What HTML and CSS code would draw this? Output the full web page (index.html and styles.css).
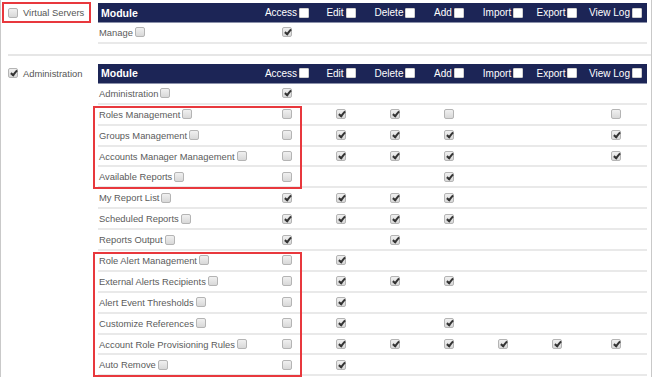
FILE: index.html
```html
<!DOCTYPE html>
<html>
<head>
<meta charset="utf-8">
<link rel="stylesheet" href="styles.css">
</head>
<body>
<div class="frame">
  <section class="perm">
    <div class="side">
      <div class="side-label hl"><span class="cb"></span><span>Virtual Servers</span></div>
    </div>
    <div class="table">
      <div class="row head">
        <div class="c mod">Module</div>
        <div class="c">Access<span class="hcb"></span></div>
        <div class="c">Edit<span class="hcb"></span></div>
        <div class="c">Delete<span class="hcb"></span></div>
        <div class="c">Add<span class="hcb"></span></div>
        <div class="c">Import<span class="hcb"></span></div>
        <div class="c">Export<span class="hcb"></span></div>
        <div class="c">View Log<span class="hcb"></span></div>
      </div>
      <div class="row">
        <div class="c mod">Manage<span class="cb"></span></div>
        <div class="c"><span class="cb on"></span></div>
        <div class="c"></div><div class="c"></div><div class="c"></div><div class="c"></div><div class="c"></div><div class="c"></div>
      </div>
    </div>
  </section>
  <div class="divider"></div>
  <section class="perm">
    <div class="side">
      <div class="side-label"><span class="cb on"></span><span>Administration</span></div>
    </div>
    <div class="table">
      <div class="row head">
        <div class="c mod">Module</div>
        <div class="c">Access<span class="hcb"></span></div>
        <div class="c">Edit<span class="hcb"></span></div>
        <div class="c">Delete<span class="hcb"></span></div>
        <div class="c">Add<span class="hcb"></span></div>
        <div class="c">Import<span class="hcb"></span></div>
        <div class="c">Export<span class="hcb"></span></div>
        <div class="c">View Log<span class="hcb"></span></div>
      </div>
      <div class="row">
        <div class="c mod">Administration<span class="cb"></span></div>
        <div class="c"><span class="cb on"></span></div>
        <div class="c"></div><div class="c"></div><div class="c"></div><div class="c"></div><div class="c"></div><div class="c"></div>
      </div>
      <div class="group">
        <div class="row">
          <div class="c mod">Roles Management<span class="cb"></span></div>
          <div class="c"><span class="cb"></span></div>
          <div class="c"><span class="cb on"></span></div>
          <div class="c"><span class="cb on"></span></div>
          <div class="c"><span class="cb"></span></div>
          <div class="c"></div><div class="c"></div>
          <div class="c"><span class="cb"></span></div>
        </div>
        <div class="row">
          <div class="c mod">Groups Management<span class="cb"></span></div>
          <div class="c"><span class="cb"></span></div>
          <div class="c"><span class="cb on"></span></div>
          <div class="c"><span class="cb on"></span></div>
          <div class="c"><span class="cb on"></span></div>
          <div class="c"></div><div class="c"></div>
          <div class="c"><span class="cb on"></span></div>
        </div>
        <div class="row">
          <div class="c mod">Accounts Manager Management<span class="cb"></span></div>
          <div class="c"><span class="cb"></span></div>
          <div class="c"><span class="cb on"></span></div>
          <div class="c"><span class="cb on"></span></div>
          <div class="c"><span class="cb on"></span></div>
          <div class="c"></div><div class="c"></div>
          <div class="c"><span class="cb on"></span></div>
        </div>
        <div class="row">
          <div class="c mod">Available Reports<span class="cb"></span></div>
          <div class="c"><span class="cb"></span></div>
          <div class="c"></div><div class="c"></div>
          <div class="c"><span class="cb on"></span></div>
          <div class="c"></div><div class="c"></div><div class="c"></div>
        </div>
      </div>
      <div class="row">
        <div class="c mod">My Report List<span class="cb"></span></div>
        <div class="c"><span class="cb on"></span></div>
        <div class="c"><span class="cb on"></span></div>
        <div class="c"><span class="cb on"></span></div>
        <div class="c"><span class="cb on"></span></div>
        <div class="c"></div><div class="c"></div><div class="c"></div>
      </div>
      <div class="row">
        <div class="c mod">Scheduled Reports<span class="cb"></span></div>
        <div class="c"><span class="cb on"></span></div>
        <div class="c"><span class="cb on"></span></div>
        <div class="c"><span class="cb on"></span></div>
        <div class="c"><span class="cb on"></span></div>
        <div class="c"></div><div class="c"></div><div class="c"></div>
      </div>
      <div class="row">
        <div class="c mod">Reports Output<span class="cb"></span></div>
        <div class="c"><span class="cb on"></span></div>
        <div class="c"></div>
        <div class="c"><span class="cb on"></span></div>
        <div class="c"></div><div class="c"></div><div class="c"></div><div class="c"></div>
      </div>
      <div class="group">
        <div class="row">
          <div class="c mod">Role Alert Management<span class="cb"></span></div>
          <div class="c"><span class="cb"></span></div>
          <div class="c"><span class="cb on"></span></div>
          <div class="c"></div><div class="c"></div><div class="c"></div><div class="c"></div><div class="c"></div>
        </div>
        <div class="row">
          <div class="c mod">External Alerts Recipients<span class="cb"></span></div>
          <div class="c"><span class="cb"></span></div>
          <div class="c"><span class="cb on"></span></div>
          <div class="c"><span class="cb on"></span></div>
          <div class="c"><span class="cb on"></span></div>
          <div class="c"></div><div class="c"></div><div class="c"></div>
        </div>
        <div class="row">
          <div class="c mod">Alert Event Thresholds<span class="cb"></span></div>
          <div class="c"><span class="cb"></span></div>
          <div class="c"><span class="cb on"></span></div>
          <div class="c"></div><div class="c"></div><div class="c"></div><div class="c"></div><div class="c"></div>
        </div>
        <div class="row">
          <div class="c mod">Customize References<span class="cb"></span></div>
          <div class="c"><span class="cb"></span></div>
          <div class="c"><span class="cb on"></span></div>
          <div class="c"></div>
          <div class="c"><span class="cb on"></span></div>
          <div class="c"></div><div class="c"></div><div class="c"></div>
        </div>
        <div class="row">
          <div class="c mod">Account Role Provisioning Rules<span class="cb"></span></div>
          <div class="c"><span class="cb"></span></div>
          <div class="c"><span class="cb on"></span></div>
          <div class="c"><span class="cb on"></span></div>
          <div class="c"><span class="cb on"></span></div>
          <div class="c"><span class="cb on"></span></div>
          <div class="c"><span class="cb on"></span></div>
          <div class="c"><span class="cb on"></span></div>
        </div>
        <div class="row">
          <div class="c mod">Auto Remove<span class="cb"></span></div>
          <div class="c"><span class="cb"></span></div>
          <div class="c"><span class="cb on"></span></div>
          <div class="c"></div><div class="c"></div><div class="c"></div><div class="c"></div><div class="c"></div>
        </div>
      </div>
    </div>
  </section>
</div>
</body>
</html>
```
FILE: styles.css
```css
html, body {
  margin: 0;
  padding: 0;
  background: #fff;
}
body {
  font-family: "Liberation Sans", Arial, sans-serif;
  color: #555;
}
.frame {
  width: 650px;
  border: 1px solid #c9c9c9;
  border-top: none;
  padding-bottom: 1px;
}
.perm {
  display: flex;
  align-items: flex-start;
  padding-top: 3px;
}
.side {
  width: 97px;
  flex: none;
  display: flex;
  align-items: flex-start;
}
.side-label {
  display: flex;
  align-items: center;
  gap: 5px;
  height: 17px;
  margin-top: -1px;
  margin-left: 1px;
  padding: 0 4px;
  border: 2px solid transparent;
  font-size: 9.4px;
  color: #555;
  white-space: nowrap;
}
.side-label.hl {
  border-color: #e8383d;
  padding-right: 5px;
}
.table {
  width: 549px;
  flex: none;
}
.row {
  display: grid;
  grid-template-columns: 162px repeat(6, 54px) 63px;
  height: 20.9px;
  box-sizing: border-box;
  border-bottom: 2px solid #e9e9e9;
}
.row.head {
  height: 20px;
  background: #1c2556;
  border-bottom: 1px solid #8b91aa;
  color: #fff;
  font-size: 10px;
}
.c {
  display: flex;
  align-items: center;
  justify-content: center;
  gap: 2px;
  white-space: nowrap;
}
.mod {
  justify-content: flex-start;
  padding-left: 1px;
  font-size: 9.4px;
  color: #5b5b5b;
  gap: 2px;
}
.head .mod {
  padding-left: 3px;
  font-weight: bold;
  font-size: 10.5px;
  color: #fff;
}
.hcb {
  width: 10px;
  height: 10px;
  background: #fff;
  border: 1px solid #d0d0d0;
  border-radius: 1px;
  box-sizing: border-box;
}
.cb {
  position: relative;
  display: inline-block;
  width: 10px;
  height: 10px;
  box-sizing: border-box;
  border: 1px solid #b4b4b4;
  border-radius: 2px;
  background: linear-gradient(#f0f0f0, #d8d8d8);
  flex: none;
}
.cb.on::after {
  content: "";
  position: absolute;
  left: 3px;
  top: 0px;
  width: 2px;
  height: 5px;
  border-right: 2px solid #333;
  border-bottom: 2px solid #333;
  transform: rotate(40deg);
}
.divider {
  margin: 10px 0 5px 7px;
  height: 2px;
  background: #e6e6e6;
}
.group {
  position: relative;
}
.group::after {
  content: "";
  position: absolute;
  left: -5px;
  width: 205px;
  top: 1px;
  bottom: -1px;
  border: 2px solid #e8383d;
  pointer-events: none;
}
```
